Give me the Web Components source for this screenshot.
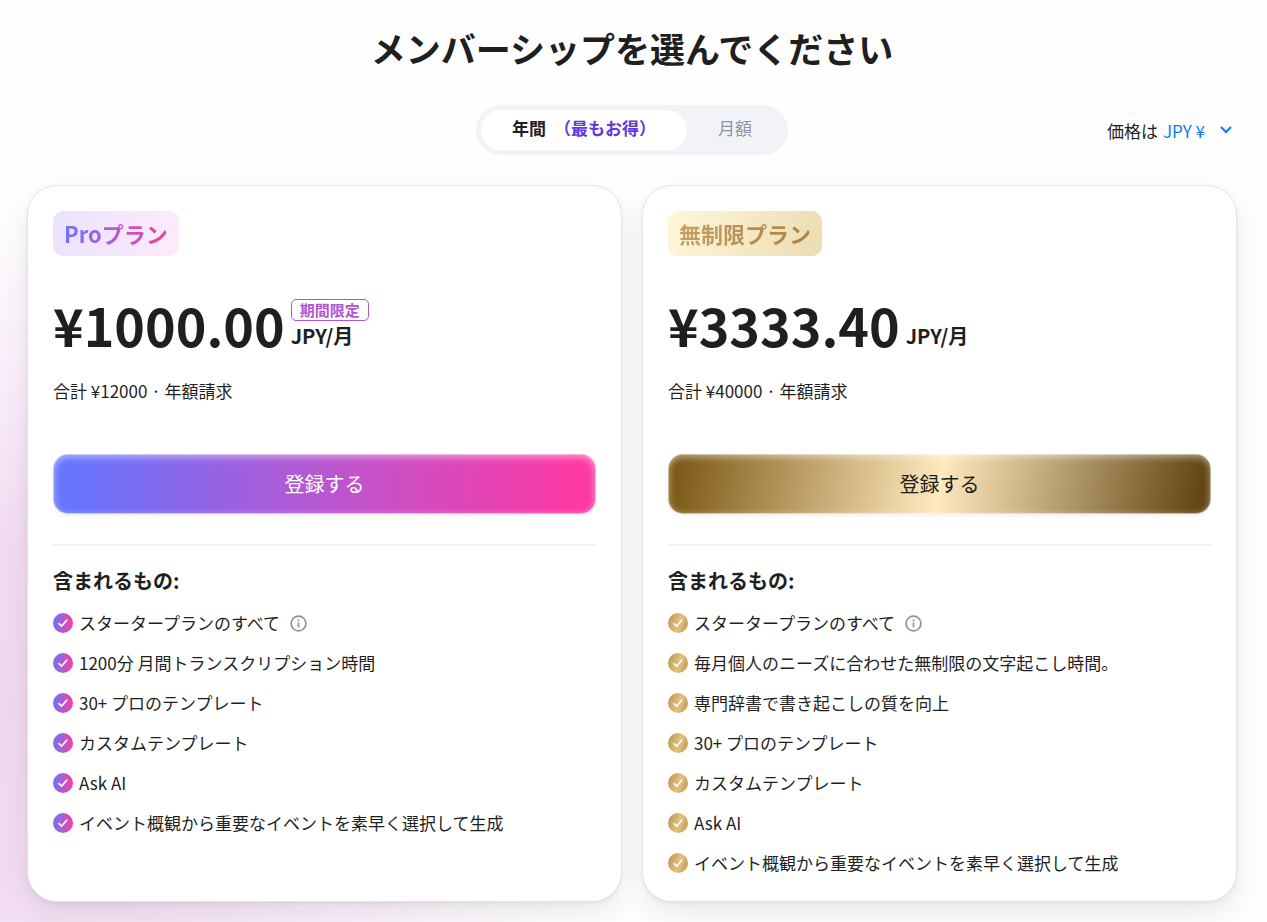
<!DOCTYPE html>
<html lang="ja">
<head>
<meta charset="utf-8">
<meta name="viewport" content="width=device-width, initial-scale=1">
<title>メンバーシップ</title>
<style>
  html { background: #fefefe; }
  body {
    margin: 0;
    font-family: "Noto Sans CJK JP", sans-serif;
    color: #1f1f1f;
  }
</style>
</head>
<body>
<membership-page></membership-page>

<template id="page-template">
  <style>
    :host {
      display: block;
      box-sizing: border-box;
      min-height: 100vh;
      padding: 18px 30px 20px 27px;
      overflow: hidden;
      background:
        radial-gradient(ellipse 620px 500px at 0 710px, #f0d8ee 0%, #f2dcf2 35%, #f9eefa 68%, rgba(254, 254, 254, 0) 100%);
    }
    h1 {
      margin: 0;
      font-size: 35px;
      line-height: 60px;
      font-weight: 700;
      text-align: center;
    }
    .controls {
      display: grid;
      grid-template-columns: 1fr auto 1fr;
      align-items: center;
      margin: 27px 0 30px;
    }
    billing-toggle { grid-column: 2; }
    currency-picker { justify-self: end; }
    .plans {
      display: grid;
      grid-template-columns: repeat(auto-fit, minmax(min(100%, 480px), 1fr));
      gap: 20px;
    }
    plan-card.gold {
      --badge-bg: linear-gradient(105deg, #fff6da, #ecdcb2);
      --badge-ink: linear-gradient(90deg, #c4a064, #ad8246);
      --button-bg: linear-gradient(100deg, #7d5a17 2%, #ffe9bd 50%, #614512 98%);
      --button-ink: #1f1f1f;
      --check-bg: linear-gradient(110deg, #b98e4a, #e3c582 55%, #b98e4a);
    }
  </style>
  <h1>メンバーシップを選んでください</h1>
  <div class="controls">
    <billing-toggle></billing-toggle>
    <currency-picker></currency-picker>
  </div>
  <main class="plans">
    <plan-card>
      <span slot="name">Proプラン</span>
      <span slot="price">¥1000.00</span>
      <span slot="offer">期間限定</span>
      <span slot="total">合計 ¥12000 · 年額請求</span>
      <plan-feature info>スタータープランのすべて</plan-feature>
      <plan-feature>1200分 月間トランスクリプション時間</plan-feature>
      <plan-feature>30+ プロのテンプレート</plan-feature>
      <plan-feature>カスタムテンプレート</plan-feature>
      <plan-feature>Ask AI</plan-feature>
      <plan-feature>イベント概観から重要なイベントを素早く選択して生成</plan-feature>
    </plan-card>
    <plan-card class="gold">
      <span slot="name">無制限プラン</span>
      <span slot="price">¥3333.40</span>
      <span slot="total">合計 ¥40000 · 年額請求</span>
      <plan-feature info>スタータープランのすべて</plan-feature>
      <plan-feature>毎月個人のニーズに合わせた無制限の文字起こし時間。</plan-feature>
      <plan-feature>専門辞書で書き起こしの質を向上</plan-feature>
      <plan-feature>30+ プロのテンプレート</plan-feature>
      <plan-feature>カスタムテンプレート</plan-feature>
      <plan-feature>Ask AI</plan-feature>
      <plan-feature>イベント概観から重要なイベントを素早く選択して生成</plan-feature>
    </plan-card>
  </main>
</template>

<template id="toggle-template">
  <style>
    :host {
      display: flex;
      padding: 5px;
      border-radius: 25px;
      background: #f1f3f8;
    }
    button {
      display: flex;
      align-items: center;
      gap: 8px;
      height: 40px;
      padding: 0 31px 4px;
      border: 0;
      border-radius: 20px;
      background: none;
      font: inherit;
      font-size: 17px;
      line-height: 24px;
      color: #8d939f;
      cursor: pointer;
    }
    button[aria-pressed="true"] {
      background: #fff;
      color: #1f1f1f;
      font-weight: 700;
    }
    .best { color: #6236e0; }
  </style>
  <button type="button" aria-pressed="true"><span>年間</span><span class="best">（最もお得）</span></button>
  <button type="button" aria-pressed="false">月額</button>
</template>

<template id="currency-template">
  <style>
    :host {
      display: flex;
      align-items: center;
      gap: 5px;
      padding: 2px 4px 0 0;
      font-size: 17px;
      line-height: 26px;
    }
    .field { display: grid; align-items: center; }
    select, svg { grid-area: 1 / 1; }
    select {
      appearance: none;
      height: 26px;
      margin: 0;
      padding: 0 28px 0 0;
      border: 0;
      background: none;
      font: inherit;
      color: #0a7cf0;
      cursor: pointer;
    }
    svg { justify-self: end; pointer-events: none; }
  </style>
  <label for="currency">価格は</label>
  <span class="field">
    <select id="currency"><option>JPY ¥</option></select>
    <svg width="14" height="16" viewBox="0 0 14 16" fill="none" stroke="#0a7cf0" stroke-width="2"><path d="M2 4l5 5 5-5"/></svg>
  </span>
</template>

<template id="card-template">
  <style>
    :host {
      display: block;
      box-sizing: border-box;
      padding: 25px 25px 18px;
      border: 1px solid #e3e4e6;
      border-radius: 30px;
      background: #fff;
      box-shadow: 0 2px 4px rgba(0, 0, 0, 0.05), 0 12px 28px rgba(0, 0, 0, 0.08);
    }
    .badge {
      display: inline-block;
      padding: 5px 11px 6px;
      border-radius: 10px;
      background: var(--badge-bg, linear-gradient(100deg, #ebe2fc, #fdebfb));
      font-size: 22px;
      line-height: 34px;
      font-weight: 700;
      vertical-align: top;
    }
    h2 {
      margin: 0;
      font: inherit;
      color: transparent;
      background: var(--badge-ink, linear-gradient(90deg, #6c74f8, #b45ad0 50%, #f23f9d));
      -webkit-background-clip: text;
      background-clip: text;
    }
    .price {
      display: flex;
      align-items: flex-end;
      gap: 6px;
      margin-top: 39px;
    }
    .amount { font-size: 52px; line-height: 60px; font-weight: 700; }
    .unit {
      display: flex;
      flex-direction: column;
      align-items: flex-start;
      padding-bottom: 4px;
      font-size: 20px;
      line-height: 30px;
      font-weight: 700;
    }
    ::slotted([slot="offer"]) {
      padding: 0 8px;
      border: 1px solid #b055d6;
      border-radius: 5px;
      font-size: 15px;
      line-height: 20px;
      color: #b055d6;
    }
    .total { margin: 23px 0 0; font-size: 17px; line-height: 26px; }
    button {
      display: block;
      width: 100%;
      height: 60px;
      margin: 50px 0 30px;
      padding: 0 0 2px;
      border: 1px solid rgba(255, 255, 255, 0.6);
      border-radius: 15px;
      background: var(--button-bg, linear-gradient(90deg, #6676ff 3%, #b956d0 50%, #ff3aa4 97%)) border-box;
      box-shadow: inset 0 2px 7px rgba(255, 255, 255, 0.5), 0 2px 4px rgba(0, 0, 0, 0.06);
      font: inherit;
      font-size: 20px;
      color: var(--button-ink, #fff);
      cursor: pointer;
    }
    hr { height: 2px; margin: 0; border: 0; background: #f1f1f2; }
    h3 { margin: 20px 0 7px; font-size: 20px; line-height: 30px; font-weight: 700; }
  </style>
  <div class="badge"><h2><slot name="name"></slot></h2></div>
  <div class="price">
    <span class="amount"><slot name="price"></slot></span>
    <span class="unit"><slot name="offer"></slot><span>JPY/月</span></span>
  </div>
  <p class="total"><slot name="total"></slot></p>
  <button type="button">登録する</button>
  <hr>
  <h3>含まれるもの:</h3>
  <div role="list"><slot></slot></div>
</template>

<template id="feature-template">
  <style>
    :host {
      display: flex;
      align-items: center;
      gap: 6px;
      min-height: 40px;
      font-size: 17px;
      line-height: 26px;
    }
    .check {
      display: grid;
      place-items: center;
      flex: none;
      width: 20px;
      height: 20px;
      border-radius: 50%;
      background: var(--check-bg, linear-gradient(90deg, #6c74f8, #b45ad0 50%, #f83da4));
    }
    .info { display: none; margin-left: 4px; }
    :host([info]) .info { display: block; }
  </style>
  <span class="check"><svg width="20" height="20" viewBox="0 0 20 20" fill="none" stroke="#fff" stroke-width="1.6" stroke-linecap="round" stroke-linejoin="round"><path d="M6 10.6l2.7 2.5 5-5.9"/></svg></span>
  <span><slot></slot></span>
  <svg class="info" width="17" height="17" viewBox="0 0 17 17" fill="none" stroke="#8c92a0" stroke-width="1.7"><circle cx="8.5" cy="8.5" r="7.4"/><path d="M8.5 7.6v4.6M8.5 4.5v1.7"/></svg>
</template>

<script>
  class TemplateElement extends HTMLElement {
    constructor() {
      super();
      const template = document.getElementById(this.constructor.template);
      this.attachShadow({ mode: "open" }).append(template.content.cloneNode(true));
    }
  }

  class PlanFeature extends TemplateElement {
    static template = "feature-template";
    connectedCallback() { this.setAttribute("role", "listitem"); }
  }

  class PlanCard extends TemplateElement {
    static template = "card-template";
  }

  class CurrencyPicker extends TemplateElement {
    static template = "currency-template";
  }

  class BillingToggle extends TemplateElement {
    static template = "toggle-template";
    connectedCallback() {
      const buttons = this.shadowRoot.querySelectorAll("button");
      buttons.forEach((button) => button.addEventListener("click", () => {
        buttons.forEach((b) => b.setAttribute("aria-pressed", String(b === button)));
      }));
    }
  }

  class MembershipPage extends TemplateElement {
    static template = "page-template";
  }

  customElements.define("plan-feature", PlanFeature);
  customElements.define("plan-card", PlanCard);
  customElements.define("currency-picker", CurrencyPicker);
  customElements.define("billing-toggle", BillingToggle);
  customElements.define("membership-page", MembershipPage);
</script>
</body>
</html>
